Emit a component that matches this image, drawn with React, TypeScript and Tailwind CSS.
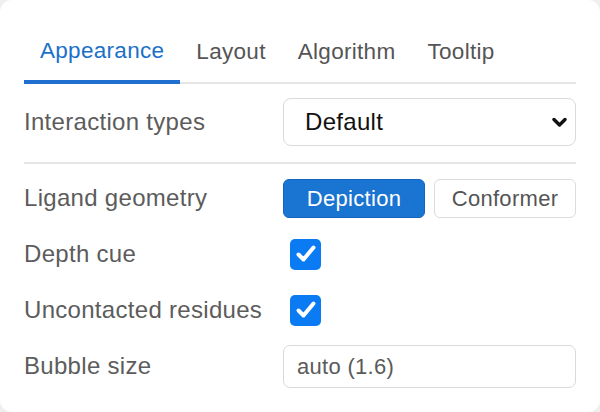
import { useState } from "react";

const tabs = ["Appearance", "Layout", "Algorithm", "Tooltip"];

function Check() {
  return (
    <span className="flex h-[31px] w-[31px] items-center justify-center rounded-[5px] bg-[#0b7bf3]">
      <svg width="22" height="22" viewBox="0 0 22 22" fill="none">
        <path d="M3.5 11.5l5 5L18.5 4.5" stroke="white" strokeWidth="4" strokeLinecap="round" strokeLinejoin="round" />
      </svg>
    </span>
  );
}

function Row({ label, children }: { label: string; children: React.ReactNode }) {
  return (
    <div className="flex h-[56px] items-center">
      <div className="w-[259px] text-[24px] text-[#5c5c5c]">{label}</div>
      <div className="flex flex-1 items-center">{children}</div>
    </div>
  );
}

export default function App() {
  const [tab] = useState(0);
  return (
    <div
      className="h-[412px] w-[600px] bg-[#efefef] tracking-[0.3px]"
      style={{ fontFamily: '"Liberation Sans", Arial, sans-serif' }}
    >
      <div className="h-full w-full rounded-[12px] bg-white px-6 pt-[21px]">
        <div className="flex border-b-2 border-[#e5e5e5] text-[22.5px]">
          {tabs.map((t, i) => (
            <div
              key={t}
              className={
                i === tab
                  ? "-mb-[2px] flex h-[63px] items-center border-b-4 border-[#1e6fcf] px-4 text-[#1b70c9]"
                  : "flex h-[61px] items-center px-4 text-[#555555]"
              }
            >
              {t}
            </div>
          ))}
        </div>

        <div className="flex items-center border-b-2 border-[#e5e5e5] pb-[16px] pt-[14px]">
          <div className="w-[259px] text-[24px] text-[#5c5c5c]">Interaction types</div>
          <div className="flex h-[48px] flex-1 items-center justify-between rounded-[8px] border border-[#d9d9d9] pl-[21px] pr-[8px] text-[24px] text-[#111]">
            <span>Default</span>
            <svg width="15" height="11" viewBox="0 0 15 11" fill="none">
              <path d="M2 2.5l5.5 5.5 5.5-5.5" stroke="#111" strokeWidth="3.4" strokeLinecap="round" strokeLinejoin="round" />
            </svg>
          </div>
        </div>

        <div className="pt-[6px]">
          <Row label="Ligand geometry">
            <div className="flex w-full gap-[9px] text-[22px]">
              <button className="h-[39px] flex-1 rounded-[6px] border border-[#1565c0] bg-[#1a74d2] text-white">
                Depiction
              </button>
              <button className="h-[39px] flex-1 rounded-[6px] border border-[#dcdcdc] bg-white text-[#555]">
                Conformer
              </button>
            </div>
          </Row>
          <Row label="Depth cue">
            <span className="ml-[7px]">
              <Check />
            </span>
          </Row>
          <Row label="Uncontacted residues">
            <span className="ml-[7px]">
              <Check />
            </span>
          </Row>
          <Row label="Bubble size">
            <div className="flex h-[43px] w-full items-center rounded-[7px] border border-[#d9d9d9] pl-[13px] text-[22px] text-[#5a5a5a]">
              auto (1.6)
            </div>
          </Row>
        </div>
      </div>
    </div>
  );
}
